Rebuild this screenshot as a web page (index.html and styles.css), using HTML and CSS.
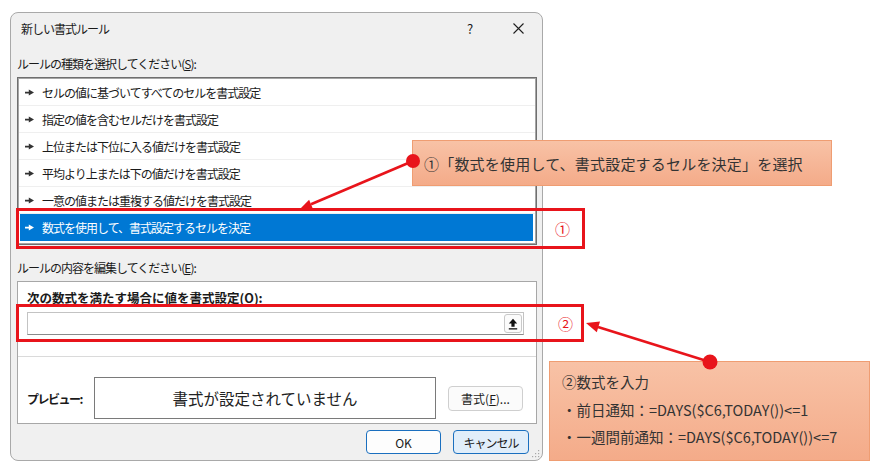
FILE: index.html
```html
<!DOCTYPE html>
<html lang="ja">
<head>
    <meta charset="UTF-8">
    <title>新しい書式ルール</title>
    <link rel="stylesheet" href="styles.css">
</head>
<body>
    <div class="page">
        <div class="dialog">
            <div class="titlebar">
                <span class="title">新しい書式ルール</span>
                <span class="help">?</span>
                <span class="close">
                    <svg width="11" height="11" viewBox="0 0 11 11"><path d="M0.5 0.5L10.5 10.5M10.5 0.5L0.5 10.5" stroke="#1e1e1e" stroke-width="1.1"/></svg>
                </span>
            </div>

            <div class="dialog-body">
                <div class="section-label">ルールの種類を選択してください(<u>S</u>):</div>
                <ul class="rule-list">
                    <li class="rule-item"><svg class="bullet" width="9" height="7" viewBox="0 0 9 7"><path d="M0 2.7h4.5v1.7H0z M3.8 0.6L9 3.55L3.8 6.5z" fill="currentColor"/></svg>セルの値に基づいてすべてのセルを書式設定</li>
                    <li class="rule-item"><svg class="bullet" width="9" height="7" viewBox="0 0 9 7"><path d="M0 2.7h4.5v1.7H0z M3.8 0.6L9 3.55L3.8 6.5z" fill="currentColor"/></svg>指定の値を含むセルだけを書式設定</li>
                    <li class="rule-item"><svg class="bullet" width="9" height="7" viewBox="0 0 9 7"><path d="M0 2.7h4.5v1.7H0z M3.8 0.6L9 3.55L3.8 6.5z" fill="currentColor"/></svg>上位または下位に入る値だけを書式設定</li>
                    <li class="rule-item"><svg class="bullet" width="9" height="7" viewBox="0 0 9 7"><path d="M0 2.7h4.5v1.7H0z M3.8 0.6L9 3.55L3.8 6.5z" fill="currentColor"/></svg>平均より上または下の値だけを書式設定</li>
                    <li class="rule-item"><svg class="bullet" width="9" height="7" viewBox="0 0 9 7"><path d="M0 2.7h4.5v1.7H0z M3.8 0.6L9 3.55L3.8 6.5z" fill="currentColor"/></svg>一意の値または重複する値だけを書式設定</li>
                    <li class="rule-item selected"><svg class="bullet" width="9" height="7" viewBox="0 0 9 7"><path d="M0 2.7h4.5v1.7H0z M3.8 0.6L9 3.55L3.8 6.5z" fill="currentColor"/></svg>数式を使用して、書式設定するセルを決定</li>
                </ul>

                <div class="section-label second">ルールの内容を編集してください(<u>E</u>):</div>
                <div class="rule-panel">
                    <div class="formula-label">次の数式を満たす場合に値を書式設定(<u>O</u>):</div>
                    <div class="formula-input">
                        <span class="ref-btn">
                            <svg width="10" height="12" viewBox="0 0 10 12"><path d="M5 0.8L9.2 5.4H6.6V8.8H3.4V5.4H0.8Z" fill="#111"/><rect x="0.8" y="10.2" width="8.4" height="1.3" fill="#111"/></svg>
                        </span>
                    </div>
                    <div class="panel-sep"></div>
                    <div class="preview-row">
                        <span class="preview-label">プレビュー:</span>
                        <div class="preview-box">書式が設定されていません</div>
                        <button class="format-btn">書式(<u>F</u>)...</button>
                    </div>
                </div>

                <div class="dialog-buttons">
                    <button class="btn">OK</button>
                    <button class="btn cancel">キャンセル</button>
                </div>
            </div>

            <svg class="grip" width="8" height="8" viewBox="0 0 8 8" fill="#a8a8a8">
                <rect x="6" y="0" width="1.2" height="1.2"/>
                <rect x="3" y="3" width="1.2" height="1.2"/><rect x="6" y="3" width="1.2" height="1.2"/>
                <rect x="0" y="6" width="1.2" height="1.2"/><rect x="3" y="6" width="1.2" height="1.2"/><rect x="6" y="6" width="1.2" height="1.2"/>
            </svg>
        </div>

        <!-- annotations -->
        <div class="mark mark-1"><span>①</span></div>
        <div class="mark mark-2"><span>②</span></div>

        <div class="callout callout-1">①「数式を使用して、書式設定するセルを決定」を選択</div>
        <div class="callout callout-2">
            <div>②数式を入力</div>
            <div>・前日通知：=DAYS($C6,TODAY())&lt;=1</div>
            <div>・一週間前通知：=DAYS($C6,TODAY())&lt;=7</div>
        </div>

        <svg class="arrows" width="886" height="471" viewBox="0 0 886 471">
            <line x1="413" y1="161" x2="311" y2="204.3" stroke="#e8141b" stroke-width="2.6"/>
            <polygon points="300,209 313,208.9 309.1,199.7" fill="#e8141b"/>
            <circle cx="413" cy="161" r="7" fill="#e8141b"/>
            <line x1="710" y1="362" x2="598" y2="327" stroke="#e8141b" stroke-width="2.6"/>
            <polygon points="586,323 600,321.6 596.8,332.2" fill="#e8141b"/>
            <circle cx="710" cy="362" r="7.5" fill="#e8141b"/>
        </svg>
    </div>
</body>
</html>
```

FILE: styles.css
```css
body {
    margin: 0;
    background: #fff;
    font-family: "Noto Sans CJK JP", "Noto Sans", sans-serif;
    color: #1a1a1a;
}

.page {
    position: relative;
    width: 886px;
    height: 471px;
    overflow: hidden;
}

/* dialog */
.dialog {
    position: relative;
    margin: 12px 0 0 10px;
    width: 533px;
    height: 449px;
    box-sizing: border-box;
    background: #f0f0f0;
    border: 1px solid #a9a9a9;
    border-radius: 8px;
}

.titlebar {
    display: flex;
    align-items: center;
    height: 30px;
    padding: 0 0 2px 10px;
    font-size: 12px;
    letter-spacing: -1px;
}

.title {
    flex: 1;
}

.help,
.close {
    width: 48px;
    display: flex;
    justify-content: center;
    align-items: center;
}

.help {
    font-size: 13px;
    letter-spacing: 0;
}

.dialog-body {
    padding: 0 5px 0 6px;
}

.section-label {
    margin-top: 10px;
    line-height: 18px;
    font-size: 12px;
    letter-spacing: -1px;
}

.section-label.second {
    margin-top: 14px;
}

.rule-list {
    list-style: none;
    margin: 4px 0 0;
    padding: 1px 0 0;
    height: 168px;
    box-sizing: border-box;
    background: #fff;
    border: 1px solid #6f6f6f;
    box-shadow: inset 0 0 0 1px #a5a5a5;
}

.rule-item {
    display: flex;
    align-items: center;
    height: 26px;
    padding-left: 6px;
    margin: 0 1px;
    border-bottom: 1px solid #efefef;
    font-size: 12px;
    letter-spacing: -1px;
    color: #1a1a1a;
}

.rule-item .bullet {
    margin-right: 8px;
    color: #333;
    flex: none;
}

.rule-item.selected {
    height: 27px;
    margin: 0 3px 0 2px;
    padding-left: 5px;
    border-bottom: none;
    background: #0078d4;
    color: #fff;
}

.rule-item.selected .bullet {
    color: #fff;
}

.rule-panel {
    margin-top: 4px;
    background: #fff;
    border: 1px solid #a7a7a7;
    padding-bottom: 4px;
}

.formula-label {
    margin: 7px 0 0 9px;
    line-height: 18px;
    font-size: 12.5px;
    font-weight: bold;
}

.formula-input {
    display: flex;
    justify-content: flex-end;
    align-items: center;
    margin: 5px 12px 0 9px;
    height: 23px;
    box-sizing: border-box;
    border: 1px solid #c3c3c3;
    border-bottom-color: #8a8a8a;
    background: #fff;
}

.ref-btn {
    display: flex;
    justify-content: center;
    align-items: center;
    width: 18px;
    height: 19px;
    box-sizing: border-box;
    margin-right: 1px;
    border: 1px solid #c9c9c9;
    border-radius: 3px;
    background: #fbfbfb;
}

.panel-sep {
    margin-top: 21px;
    height: 1px;
    background: #dadada;
}

.preview-row {
    display: flex;
    align-items: center;
    margin-top: 20px;
    padding-left: 9px;
}

.preview-label {
    width: 67px;
    font-size: 12px;
    font-weight: bold;
    letter-spacing: -1.5px;
}

.preview-box {
    display: flex;
    justify-content: center;
    align-items: center;
    width: 342px;
    height: 42px;
    box-sizing: border-box;
    border: 1px solid #7a7a7a;
    font-size: 15.5px;
    color: #222;
}

.format-btn {
    margin-left: 12px;
    width: 75px;
    height: 25px;
    padding: 0;
    border: 1px solid #cfcfcf;
    border-radius: 4px;
    background: #fbfbfb;
    font-family: inherit;
    font-size: 12px;
    color: #1a1a1a;
}

.dialog-buttons {
    display: flex;
    justify-content: flex-end;
    gap: 12px;
    margin-top: 6px;
    padding-right: 8px;
}

.btn {
    width: 75px;
    height: 24px;
    padding: 0;
    border: 1px solid #1a6fbf;
    border-radius: 4px;
    background: #fdfdfd;
    font-family: inherit;
    font-size: 12px;
    color: #1a1a1a;
}

.btn.cancel {
    width: 76px;
    background: #e1eefa;
    letter-spacing: -1px;
}

.grip {
    position: absolute;
    right: 2px;
    bottom: 2px;
}

/* annotations */
.mark {
    position: absolute;
    display: flex;
    justify-content: flex-end;
    align-items: center;
    box-sizing: border-box;
    border: 3px solid #e8141b;
    color: #e8141b;
    font-size: 15px;
}

.mark-1 {
    left: 16px;
    top: 208px;
    width: 569px;
    height: 41px;
    padding-right: 12px;
}

.mark-2 {
    left: 16px;
    top: 304px;
    width: 568px;
    height: 38px;
    padding-right: 8px;
}

.callout {
    position: absolute;
    box-sizing: border-box;
    border: 1px solid #ef9d72;
    background: linear-gradient(#f8c2a6, #f4ab89);
    color: #333;
}

.callout-1 {
    left: 412px;
    top: 140px;
    width: 420px;
    height: 46px;
    display: flex;
    align-items: center;
    padding-left: 11px;
    font-size: 15px;
    letter-spacing: 0.2px;
}

.callout-2 {
    left: 549px;
    top: 361px;
    width: 321px;
    height: 100px;
    padding: 6px 0 0 12px;
    font-size: 14.5px;
    line-height: 27.5px;
}

.arrows {
    position: absolute;
    left: 0;
    top: 0;
    pointer-events: none;
}
```
